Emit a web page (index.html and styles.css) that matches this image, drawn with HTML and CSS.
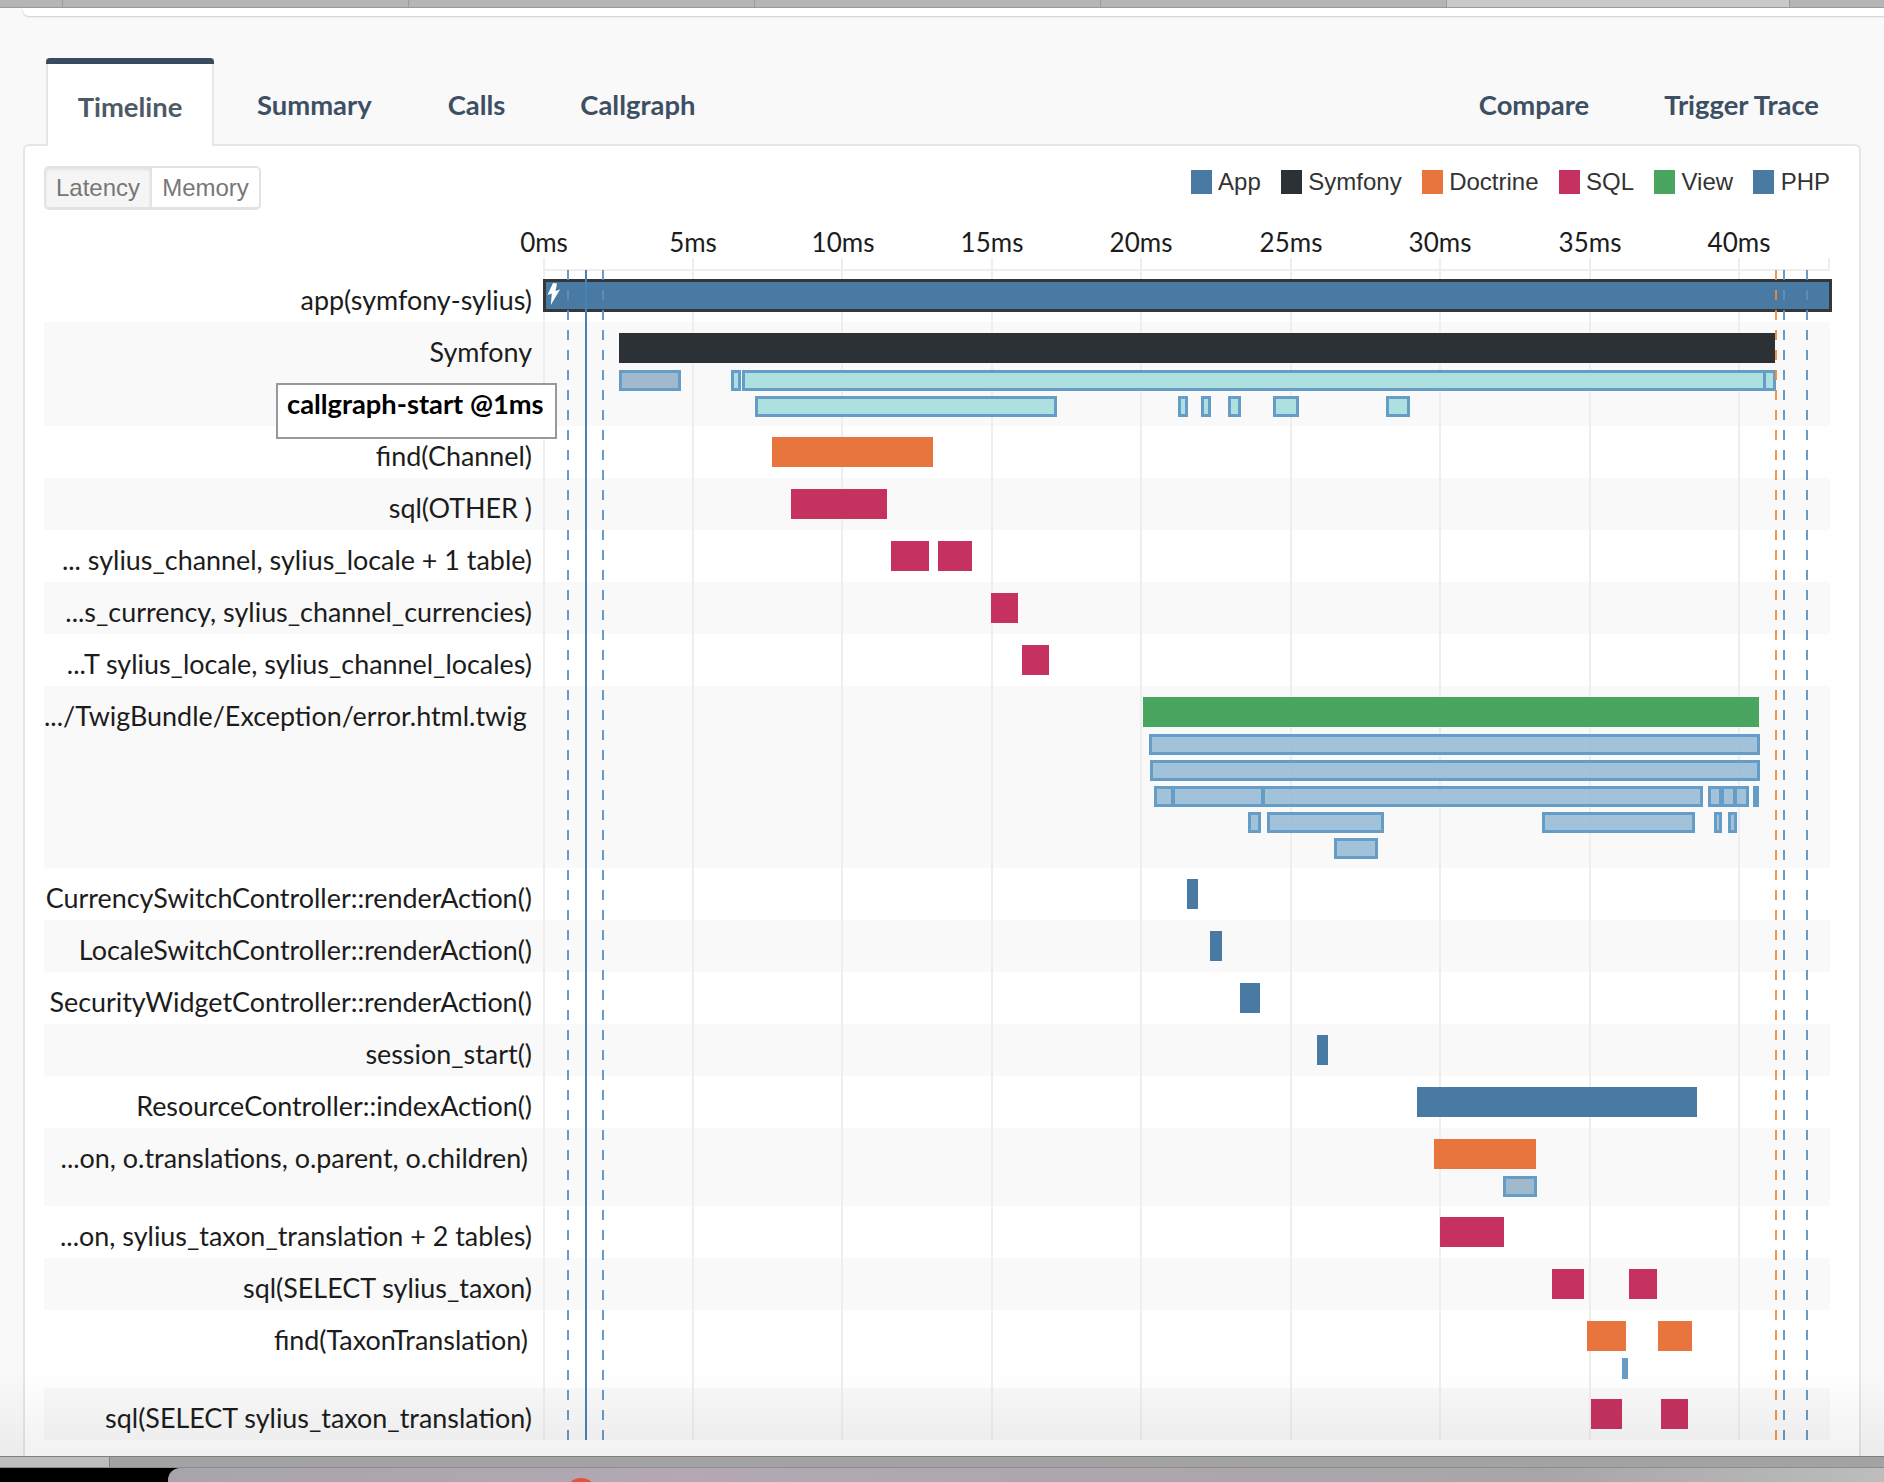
FILE: index.html
```html
<!DOCTYPE html>
<html>
    <head>
        <title>Trace Timeline</title>
        <link rel="stylesheet" href="styles.css">
    </head>
    <body>
        <div class="browser-tabs">
            <div class="browser-tab first"></div>
            <div class="browser-tab"></div>
            <div class="browser-tab"></div>
            <div class="browser-tab"></div>
            <div class="browser-tab"></div>
            <div class="browser-tab active"></div>
            <div class="browser-tab"></div>
        </div>
        <div class="top-card"></div>

        <div class="tabs">
            <a class="tab selected">Timeline</a>
            <a class="tab">Summary</a>
            <a class="tab">Calls</a>
            <a class="tab">Callgraph</a>
            <a class="tab push-right">Compare</a>
            <a class="tab">Trigger Trace</a>
        </div>

        <div class="panel">
            <div class="panel-head">
                <div class="toggle">
                    <span class="toggle-item on">Latency</span>
                    <span class="toggle-item">Memory</span>
                </div>
                <div class="legend">
                    <span class="legend-item"><i class="swatch app"></i>App</span>
                    <span class="legend-item"><i class="swatch symfony"></i>Symfony</span>
                    <span class="legend-item"><i class="swatch doctrine"></i>Doctrine</span>
                    <span class="legend-item"><i class="swatch sql"></i>SQL</span>
                    <span class="legend-item"><i class="swatch view"></i>View</span>
                    <span class="legend-item"><i class="swatch app"></i>PHP</span>
                </div>
            </div>

            <div class="axis">
                <span class="tick" style="left:0">0ms</span>
                <span class="tick" style="left:149px">5ms</span>
                <span class="tick" style="left:299px">10ms</span>
                <span class="tick" style="left:448px">15ms</span>
                <span class="tick" style="left:597px">20ms</span>
                <span class="tick" style="left:747px">25ms</span>
                <span class="tick" style="left:896px">30ms</span>
                <span class="tick" style="left:1046px">35ms</span>
                <span class="tick" style="left:1195px">40ms</span>
            </div>

            <div class="timeline">
                <div class="gridline" style="left:500px"></div>
                <div class="gridline" style="left:649px"></div>
                <div class="gridline" style="left:798px"></div>
                <div class="gridline" style="left:948px"></div>
                <div class="gridline" style="left:1097px"></div>
                <div class="gridline" style="left:1247px"></div>
                <div class="gridline" style="left:1396px"></div>
                <div class="gridline" style="left:1546px"></div>
                <div class="gridline" style="left:1695px"></div>
                <div class="gridline stub" style="left:1785px"></div>

                <div class="guide dashed" style="left:523px"></div>
                <div class="guide solid" style="left:541px"></div>
                <div class="guide dashed" style="left:558px"></div>
                <div class="guide dashed orange" style="left:1731px"></div>
                <div class="guide dashed" style="left:1739px"></div>
                <div class="guide dashed" style="left:1762px"></div>

                <div class="row">
                    <div class="label">app(symfony-sylius)</div>
                    <div class="track">
                        <div class="bar root" style="left:-1px;width:1289px">
                            <svg class="bolt" viewBox="0 0 13 22"><polygon points="6,0 0.5,12 4.8,10.5 3.8,22 13,6.5 8.5,8 10,0.5" fill="#fff"/></svg>
                        </div>
                    </div>
                </div>

                <div class="row alt h104">
                    <div class="label">Symfony</div>
                    <div class="track">
                        <div class="bar symfony" style="left:75px;width:1156px"></div>
                        <div class="sub grey l1" style="left:75px;width:62px"></div>
                        <div class="sub teal l1" style="left:187px;width:10px"></div>
                        <div class="sub teal l1" style="left:198px;width:1024px"></div>
                        <div class="sub teal l1" style="left:1219px;width:13px"></div>
                        <div class="sub teal l2" style="left:211px;width:302px"></div>
                        <div class="sub teal l2" style="left:634px;width:10px"></div>
                        <div class="sub teal l2" style="left:657px;width:10px"></div>
                        <div class="sub teal l2" style="left:684px;width:13px"></div>
                        <div class="sub teal l2" style="left:729px;width:26px"></div>
                        <div class="sub teal l2" style="left:842px;width:24px"></div>
                    </div>
                    <div class="tooltip">callgraph-start @1ms</div>
                </div>

                <div class="row">
                    <div class="label">find(Channel)</div>
                    <div class="track">
                        <div class="bar doctrine" style="left:228px;width:161px"></div>
                    </div>
                </div>

                <div class="row alt">
                    <div class="label">sql(OTHER )</div>
                    <div class="track">
                        <div class="bar sql" style="left:247px;width:96px"></div>
                    </div>
                </div>

                <div class="row">
                    <div class="label">... sylius_channel, sylius_locale + 1 table)</div>
                    <div class="track">
                        <div class="bar sql" style="left:347px;width:38px"></div>
                        <div class="bar sql" style="left:394px;width:34px"></div>
                    </div>
                </div>

                <div class="row alt">
                    <div class="label">...s_currency, sylius_channel_currencies)</div>
                    <div class="track">
                        <div class="bar sql" style="left:447px;width:27px"></div>
                    </div>
                </div>

                <div class="row">
                    <div class="label">...T sylius_locale, sylius_channel_locales)</div>
                    <div class="track">
                        <div class="bar sql" style="left:478px;width:27px"></div>
                    </div>
                </div>

                <div class="row alt h182">
                    <div class="label inset">.../TwigBundle/Exception/error.html.twig</div>
                    <div class="track">
                        <div class="bar view" style="left:598px;width:616px"></div>
                        <div class="sub blue l1" style="left:604px;width:611px"></div>
                        <div class="sub blue l2" style="left:605px;width:610px"></div>
                        <div class="sub blue l3" style="left:609px;width:20px"></div>
                        <div class="sub blue l3" style="left:627px;width:92px"></div>
                        <div class="sub blue l3" style="left:717px;width:441px"></div>
                        <div class="sub blue l3" style="left:1163px;width:14px"></div>
                        <div class="sub blue l3" style="left:1176px;width:15px"></div>
                        <div class="sub blue l3" style="left:1189px;width:15px"></div>
                        <div class="sub fill l3" style="left:1208px;width:6px"></div>
                        <div class="sub blue l4" style="left:703px;width:13px"></div>
                        <div class="sub blue l4" style="left:722px;width:117px"></div>
                        <div class="sub blue l4" style="left:997px;width:153px"></div>
                        <div class="sub blue l4" style="left:1169px;width:8px"></div>
                        <div class="sub blue l4" style="left:1183px;width:9px"></div>
                        <div class="sub blue l5" style="left:789px;width:44px"></div>
                    </div>
                </div>

                <div class="row">
                    <div class="label">CurrencySwitchController::renderAction()</div>
                    <div class="track">
                        <div class="bar app" style="left:643px;width:11px"></div>
                    </div>
                </div>

                <div class="row alt">
                    <div class="label">LocaleSwitchController::renderAction()</div>
                    <div class="track">
                        <div class="bar app" style="left:666px;width:12px"></div>
                    </div>
                </div>

                <div class="row">
                    <div class="label">SecurityWidgetController::renderAction()</div>
                    <div class="track">
                        <div class="bar app" style="left:696px;width:20px"></div>
                    </div>
                </div>

                <div class="row alt">
                    <div class="label">session_start()</div>
                    <div class="track">
                        <div class="bar app" style="left:773px;width:11px"></div>
                    </div>
                </div>

                <div class="row">
                    <div class="label">ResourceController::indexAction()</div>
                    <div class="track">
                        <div class="bar app" style="left:873px;width:280px"></div>
                    </div>
                </div>

                <div class="row alt h78">
                    <div class="label inset-sm">...on, o.translations, o.parent, o.children)</div>
                    <div class="track">
                        <div class="bar doctrine" style="left:890px;width:102px"></div>
                        <div class="sub grey l1" style="left:959px;width:34px"></div>
                    </div>
                </div>

                <div class="row">
                    <div class="label">...on, sylius_taxon_translation + 2 tables)</div>
                    <div class="track">
                        <div class="bar sql" style="left:896px;width:64px"></div>
                    </div>
                </div>

                <div class="row alt">
                    <div class="label">sql(SELECT sylius_taxon)</div>
                    <div class="track">
                        <div class="bar sql" style="left:1008px;width:32px"></div>
                        <div class="bar sql" style="left:1085px;width:28px"></div>
                    </div>
                </div>

                <div class="row h78">
                    <div class="label inset-sm">find(TaxonTranslation)</div>
                    <div class="track">
                        <div class="bar doctrine" style="left:1043px;width:39px"></div>
                        <div class="bar doctrine" style="left:1114px;width:34px"></div>
                        <div class="sub fill l1" style="left:1078px;width:6px"></div>
                    </div>
                </div>

                <div class="row alt">
                    <div class="label">sql(SELECT sylius_taxon_translation)</div>
                    <div class="track">
                        <div class="bar sql" style="left:1047px;width:31px"></div>
                        <div class="bar sql" style="left:1117px;width:27px"></div>
                    </div>
                </div>
            </div>
        </div>

        <div class="bottom-fade"></div>
        <div class="bottom-bar"><div class="bottom-tab"></div></div>
        <div class="dock">
            <div class="dock-left"></div>
            <div class="dock-main"><span class="dock-dot"></span></div>
        </div>
    </body>
</html>
```
FILE: styles.css
```css
* {
    box-sizing: border-box;
}

body {
    margin: 0;
    height: 1482px;
    overflow: hidden;
    position: relative;
    background: #f9f9f9;
    font-family: Lato, "Open Sans", sans-serif;
    color: #1c1c1c;
}

/* strip of the browser on top */
.browser-tabs {
    display: flex;
    height: 8px;
    background: #b5b5b5;
    border-bottom: 1px solid #9b9b9b;
}

.browser-tab {
    width: 346px;
    border-right: 1px solid #9b9b9b;
}

.browser-tab.first {
    width: 63px;
}

.browser-tab.active {
    width: 343px;
    background: #c9c9c9;
}

.browser-tab:last-child {
    border-right: 0;
    flex: 1;
}

.top-card {
    height: 8px;
    margin-left: 23px;
    background: #fff;
    border-bottom-left-radius: 6px;
    box-shadow: 0 1px 2px rgba(0, 0, 0, .18);
}

/* tabs */
.tabs {
    display: flex;
    align-items: stretch;
    height: 86px;
    margin: 42px 65px 0 46px;
    font-size: 27.4px;
    font-weight: 700;
    color: #3d4f63;
}

.tab {
    display: flex;
    align-items: center;
    padding-top: 6px;
    margin-left: 44px;
}

.tab.selected {
    position: relative;
    width: 168px;
    margin: 0 -1px -2px 0;
    justify-content: center;
    padding-top: 7px;
    background: #fff;
    color: #4d5a66;
    border: 2px solid #e6e6e6;
    border-bottom: 0;
    z-index: 2;
}

.tab.selected::before {
    content: "";
    position: absolute;
    left: -2px;
    right: -2px;
    top: -2px;
    height: 6px;
    background: #3a4a5f;
    border-radius: 4px 4px 0 0;
}

.tab:nth-child(3) {
    margin-left: 76px;
}

.tab:nth-child(4) {
    margin-left: 75px;
}

.tab.push-right {
    margin-left: auto;
}

.tab:last-child {
    margin-left: 75px;
}

/* panel */
.panel {
    width: 1838px;
    height: 1312px;
    margin-left: 23px;
    padding: 20px 0 0 19px;
    background: #fff;
    border: 2px solid #e6e6e6;
    border-bottom: 0;
    border-radius: 6px 6px 0 0;
}

.panel-head {
    display: flex;
    justify-content: space-between;
    height: 44px;
    width: 1786px;
}

.toggle {
    display: flex;
    width: 217px;
    height: 44px;
    border: 2px solid #e3e3e3;
    border-bottom-width: 3px;
    border-radius: 5px;
    font-family: "Liberation Sans", Arial, sans-serif;
    font-size: 24px;
    color: #777;
}

.toggle-item {
    display: flex;
    align-items: center;
    justify-content: center;
    flex: 1;
}

.toggle-item.on {
    flex: 0 0 106px;
    background: #f5f5f5;
    border-right: 2px solid #e3e3e3;
    box-shadow: inset 0 2px 3px rgba(0, 0, 0, .08);
}

.legend {
    display: flex;
    gap: 20px;
    padding-top: 4px;
    height: 28px;
    font-family: "Liberation Sans", Arial, sans-serif;
    font-size: 24px;
    line-height: 24px;
    color: #333;
}

.legend-item {
    display: flex;
    align-items: center;
    gap: 6.5px;
}

.swatch {
    display: block;
    width: 21px;
    height: 24px;
}

.swatch.app, .bar.app {
    background: #487aa3;
}

.swatch.symfony, .bar.symfony {
    background: #2b3134;
}

.swatch.doctrine, .bar.doctrine {
    background: #e8753e;
}

.swatch.sql, .bar.sql {
    background: #c63260;
}

.swatch.view, .bar.view {
    background: #4aa561;
}

/* axis */
.axis {
    position: relative;
    height: 60px;
    margin-left: 500px;
    width: 1286px;
}

.tick {
    position: absolute;
    top: 15px;
    transform: translateX(-50%);
    font-size: 26px;
    line-height: 34px;
    white-space: nowrap;
}

/* timeline */
.timeline {
    position: relative;
    width: 1786px;
    height: 1170px;
}

.timeline::before {
    content: "";
    position: absolute;
    left: 500px;
    right: 0;
    top: -1px;
    height: 2px;
    background: #eee;
}

.gridline {
    position: absolute;
    top: -12px;
    bottom: 0;
    width: 2px;
    margin-left: -1px;
    background: #eee;
    z-index: 1;
}

.gridline.stub {
    bottom: auto;
    height: 12px;
}

.guide {
    position: absolute;
    top: 0;
    bottom: 0;
    width: 2px;
    z-index: 3;
}

.guide.solid {
    background: #4a80b8;
}

.guide.dashed {
    background: repeating-linear-gradient(to bottom, #5a8fc0 0, #5a8fc0 10px, transparent 10px, transparent 20px);
    opacity: .9;
}

.guide.orange {
    background: repeating-linear-gradient(to bottom, #f08a3c 0, #f08a3c 10px, transparent 10px, transparent 20px);
}

.row {
    position: relative;
    display: flex;
    height: 52px;
}

.row.alt {
    background: #f9f9f9;
}

.row.h78 {
    height: 78px;
}

.row.h104 {
    height: 104px;
}

.row.h182 {
    height: 182px;
}

.label {
    flex: 0 0 500px;
    padding: 14px 12px 0 0;
    text-align: right;
    font-size: 26.9px;
    line-height: 32px;
    white-space: nowrap;
}

.label.inset {
    padding-right: 18px;
}

.label.inset-sm {
    padding-right: 16px;
}

.track {
    position: relative;
    flex: 1;
    z-index: 2;
}

.bar {
    position: absolute;
    top: 11px;
    height: 30px;
}

.bar.root {
    top: 9px;
    height: 33px;
    background: #487aa3;
    border: 3px solid #33373a;
}

.bolt {
    position: absolute;
    left: 1px;
    top: 1px;
    width: 13px;
    height: 22px;
}

.sub {
    position: absolute;
    height: 21px;
    border: 3px solid #669dc6;
}

.sub.grey {
    background: #a0b9cd;
}

.sub.teal {
    background: #aee0e0;
}

.sub.blue {
    background: rgba(140, 180, 210, .8);
}

.sub.fill {
    background: #669dc6;
}

.l1 {
    top: 48px;
}

.l2 {
    top: 74px;
}

.l3 {
    top: 100px;
}

.l4 {
    top: 126px;
}

.l5 {
    top: 152px;
}

.tooltip {
    position: absolute;
    left: 232px;
    top: 61px;
    width: 281px;
    height: 56px;
    padding: 3px 0 0 9px;
    background: #fff;
    border: 2px solid #999;
    color: #000;
    font-size: 27.3px;
    font-weight: 700;
    line-height: 32px;
    white-space: nowrap;
    z-index: 4;
}

/* bottom of the window */
.bottom-fade {
    position: absolute;
    left: 0;
    right: 0;
    top: 1370px;
    height: 86px;
    background: linear-gradient(to bottom, rgba(0, 0, 0, 0), rgba(0, 0, 0, .055));
    z-index: 5;
    pointer-events: none;
}

.bottom-bar {
    position: absolute;
    left: 0;
    right: 0;
    top: 1456px;
    height: 12px;
    background: #a3a3a3;
    border-top: 1px solid #808080;
    border-bottom: 1px solid #8c8c8c;
}

.bottom-tab {
    width: 110px;
    height: 100%;
    background: #bdbdbd;
    border-right: 1px solid #808080;
}

.dock {
    position: absolute;
    left: 0;
    right: 0;
    top: 1468px;
    height: 14px;
    display: flex;
    background: #000;
}

.dock-left {
    width: 168px;
}

.dock-main {
    position: relative;
    flex: 1;
    overflow: hidden;
    border-radius: 12px 0 0 0;
    background: linear-gradient(to right, #a9a4ab, #b3a8b4 30%, #a8a5a8 80%, #bdbdbd);
}

.dock-dot {
    position: absolute;
    left: 397px;
    top: 10px;
    width: 32px;
    height: 32px;
    border-radius: 50%;
    background: #e2533f;
}
```
